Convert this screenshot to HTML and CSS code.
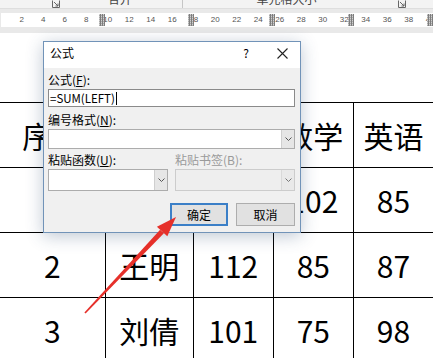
FILE: index.html
```html
<!DOCTYPE html>
<html lang="zh-CN">

<head>
    <meta charset="UTF-8">
    <meta name="viewport" content="width=device-width, initial-scale=1.0">
    <title>公式</title>
    <link rel="stylesheet" href="styles.css">
</head>

<body>
    <!-- ribbon bottom edge, cut off -->
    <div class="ribbon">
        <span class="launch">
            <svg width="8" height="8" viewBox="0 0 8 8"><path d="M0.5 0.5v7h7v-7M2 2l4 4M3.5 6H6V3.5" fill="none" stroke="#666" stroke-width="1"/></svg>
        </span>
        <span class="grp grp-merge">合并</span>
        <span class="sep"></span>
        <span class="grp grp-size">单元格大小</span>
        <span class="launch launch-r">
            <svg width="8" height="8" viewBox="0 0 8 8"><path d="M0.5 0.5v7h7v-7M2 2l4 4M3.5 6H6V3.5" fill="none" stroke="#666" stroke-width="1"/></svg>
        </span>
    </div>

    <div class="ruler-bar">
        <div class="ruler">
            <span>2</span><span>4</span><span>6</span><span>8</span><span>10</span>
            <span>12</span><span>14</span><span>16</span><span>18</span><span>20</span>
            <span>22</span><span>24</span><span>26</span><span>28</span><span>30</span>
            <span>32</span><span>34</span><span>36</span><span>38</span><span>40</span>
            <i class="mark m1"></i>
            <i class="mark m2"></i>
            <i class="mark m3"></i>
            <i class="mark m4"></i>
            <i class="mark m5"></i>
        </div>
    </div>

    <div class="page">
        <table class="grades">
            <colgroup>
                <col class="c-no">
                <col class="c-name">
                <col class="c-num">
                <col class="c-num">
                <col class="c-num">
            </colgroup>
            <tr><td>序号</td><td>姓名</td><td>语文</td><td>数学</td><td>英语</td></tr>
            <tr><td>1</td><td>张华</td><td>96</td><td>102</td><td>85</td></tr>
            <tr><td>2</td><td>王明</td><td>112</td><td>85</td><td>87</td></tr>
            <tr><td>3</td><td>刘倩</td><td>101</td><td>75</td><td>98</td></tr>
        </table>
    </div>

    <div class="dialog">
        <div class="dlg-title">
            <span class="dlg-name">公式</span>
            <span class="help">?</span>
            <span class="close">
                <svg width="11" height="11" viewBox="0 0 11 11"><path d="M0.5 0.5l10 10M10.5 0.5l-10 10" stroke="#222" stroke-width="1.1"/></svg>
            </span>
        </div>
        <div class="dlg-body">
            <label class="lbl">公式(<u>F</u>):</label>
            <div class="input">=SUM(LEFT)<span class="caret"></span></div>

            <label class="lbl lbl-gap">编号格式(<u>N</u>):</label>
            <div class="select select-wide">
                <span class="drop"><svg width="7" height="4" viewBox="0 0 7 4"><path d="M0.5 0.5l3 3 3-3" fill="none" stroke="#555"/></svg></span>
            </div>

            <div class="pair">
                <div class="col">
                    <label class="lbl">粘贴函数(<u>U</u>):</label>
                    <div class="select select-tall">
                        <span class="drop"><svg width="7" height="4" viewBox="0 0 7 4"><path d="M0.5 0.5l3 3 3-3" fill="none" stroke="#555"/></svg></span>
                    </div>
                </div>
                <div class="col disabled">
                    <label class="lbl">粘贴书签(B):</label>
                    <div class="select select-tall">
                        <span class="drop"><svg width="7" height="4" viewBox="0 0 7 4"><path d="M0.5 0.5l3 3 3-3" fill="none" stroke="#777"/></svg></span>
                    </div>
                </div>
            </div>

            <div class="buttons">
                <button class="btn btn-ok">确定</button>
                <button class="btn btn-cancel">取消</button>
            </div>
        </div>
    </div>

    <!-- red annotation arrow -->
    <svg class="arrow" width="433" height="358" viewBox="0 0 433 358">
        <polygon points="84.4,312.4 85.6,313.6 163.9,233.3 160.1,229.7" fill="#e6302a"/>
        <polygon points="176,217 167.3,236.3 156.9,226.7" fill="#e6302a"/>
    </svg>
</body>

</html>
```

FILE: styles.css
```css
* {
    margin: 0;
    padding: 0;
    box-sizing: border-box;
}

body {
    position: relative;
    width: 433px;
    height: 358px;
    overflow: hidden;
    background: #fff;
    font-family: "Noto Sans CJK SC", "Noto Sans", sans-serif;
}

/* ribbon */
.ribbon {
    display: flex;
    height: 8px;
    overflow: hidden;
    background: #f3f3f3;
    color: #444;
    font-size: 12px;
    line-height: 12px;
}

.launch {
    width: 13px;
    margin-left: 52px;
    margin-top: -3px;
}

.launch-r {
    margin-left: 8px;
}

.grp {
    margin-top: -7px;
    text-align: center;
    white-space: nowrap;
}

.grp-merge {
    width: 110px;
}

.grp-size {
    width: 207px;
}

.sep {
    width: 1px;
    margin-left: 7px;
    background: #c6c6c6;
}

/* ruler */
.ruler-bar {
    height: 25px;
    padding-top: 4px;
    background: #e9e9e9;
    border-top: 1px solid #dedede;
}

.ruler {
    position: relative;
    display: flex;
    height: 14px;
    margin-left: 1px;
    padding-left: 10px;
    overflow: hidden;
    background: #fff;
    font-family: "Liberation Sans", Arial, sans-serif;
    font-size: 8px;
    line-height: 14px;
    color: #555;
}

.ruler span {
    flex: none;
    width: 21.5px;
    text-align: center;
}

.mark {
    position: absolute;
    top: 1px;
    width: 6px;
    height: 12px;
    background-color: #a9a9a9;
    background-image:
        repeating-linear-gradient(90deg, transparent 0 1px, #7d7d7d 1px 2px),
        repeating-linear-gradient(0deg, transparent 0 1px, #cfcfcf 1px 2px);
}

.m1 { left: 98px; }
.m2 { left: 187px; }
.m3 { left: 268px; }
.m4 { left: 347px; }
.m5 { left: 426px; }

/* document table */
.page {
    padding-top: 69px;
}

.grades {
    width: 434px;
    table-layout: fixed;
    border-collapse: collapse;
    font-size: 30px;
    color: #000;
}

.c-no {
    width: 105px;
}

.c-name {
    width: 88px;
}

.c-num {
    width: 80px;
}

.grades td {
    height: 65px;
    padding: 0;
    border: 1px solid #000;
    text-align: center;
    vertical-align: middle;
    white-space: nowrap;
}

.grades td:first-child {
    border-left: none;
}

/* formula dialog */
.dialog {
    position: absolute;
    left: 43px;
    top: 41px;
    width: 258px;
    height: 192px;
    border: 1px solid #7193b8;
    background: #f0f0f0;
    box-shadow: 0 3px 16px rgba(40, 70, 110, 0.3);
    font-size: 12px;
    color: #000;
}

.dlg-title {
    display: flex;
    align-items: flex-start;
    height: 26px;
    padding: 3px 10px 0 6px;
    background: #fff;
    line-height: 16px;
}

.help {
    width: 12px;
    margin-left: auto;
    text-align: center;
}

.close {
    display: flex;
    justify-content: center;
    width: 16px;
    margin-left: 22px;
    padding-top: 3px;
}

.dlg-body {
    padding: 4px 5px 0 4px;
}

.lbl {
    display: block;
    height: 16px;
    line-height: 16px;
    white-space: nowrap;
}

.lbl-gap {
    margin-top: 5px;
}

.input {
    display: flex;
    align-items: center;
    height: 18px;
    margin-top: 1px;
    padding: 0 1px;
    border: 1px solid #8a8a8a;
    background: #fff;
    font-size: 11.5px;
}

.caret {
    width: 1px;
    height: 13px;
    margin-left: 1px;
    background: #000;
}

.select {
    display: flex;
    margin-top: 1px;
    border: 1px solid #acacac;
    background: #fff;
}

.select-wide {
    height: 20px;
}

.select-tall {
    height: 22px;
}

.drop {
    display: flex;
    align-items: center;
    justify-content: center;
    width: 13px;
    margin-left: auto;
    border-left: 1px solid #cfcfcf;
    background: #e6e6e6;
}

.pair {
    display: flex;
    gap: 7px;
    margin-top: 3px;
}

.col {
    width: 120px;
}

.disabled .lbl {
    color: #9a9a9a;
}

.disabled .select {
    border-color: #cccccc;
    background: #eeeeee;
}

.disabled .drop {
    background: #e9e9e9;
    border-left-color: #d9d9d9;
}

.buttons {
    display: flex;
    justify-content: flex-end;
    gap: 8px;
    margin-top: 12px;
}

.btn {
    height: 23px;
    border: 1px solid #adadad;
    background: #e1e1e1;
    font-family: inherit;
    font-size: 12px;
    color: #000;
}

.btn-ok {
    width: 58px;
    border: 2px solid #3b7fc7;
}

.btn-cancel {
    width: 59px;
}

.arrow {
    position: absolute;
    left: 0;
    top: 0;
    pointer-events: none;
}
```
